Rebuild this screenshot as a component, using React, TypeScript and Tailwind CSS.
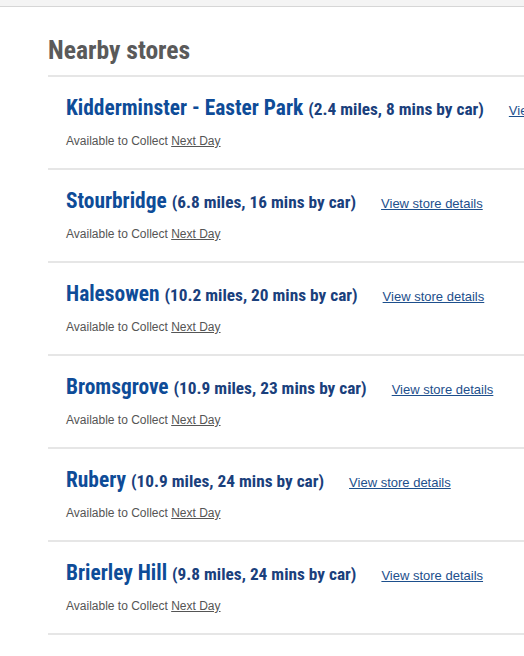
import React from "react";

const stores = [
  { name: "Kidderminster - Easter Park", detail: "(2.4 miles, 8 mins by car)" },
  { name: "Stourbridge", detail: "(6.8 miles, 16 mins by car)" },
  { name: "Halesowen", detail: "(10.2 miles, 20 mins by car)" },
  { name: "Bromsgrove", detail: "(10.9 miles, 23 mins by car)" },
  { name: "Rubery", detail: "(10.9 miles, 24 mins by car)" },
  { name: "Brierley Hill", detail: "(9.8 miles, 24 mins by car)" },
];

const cond = "font-['Roboto_Condensed',Roboto,sans-serif] [font-stretch:condensed]";

export default function App() {
  return (
    <div className="w-[524px] h-[656px] overflow-hidden bg-white font-['Liberation_Sans',Arial,sans-serif]">
      <div className="h-[7px] bg-[#f4f4f4] border-b border-[#d6d6d6]" />
      <div className="pl-[48px]">
        <h2 className={`pt-[27px] pb-[9px] text-[25.6px] leading-[32px] font-bold text-[#5a5a5a] ${cond} border-b-2 border-[#e6e6e6]`}>
          Nearby stores
        </h2>
        <ul>
          {stores.map((s) => (
            <li key={s.name} className="h-[93px] border-b-2 border-[#e6e6e6] pl-[18px] pt-[19px] whitespace-nowrap">
              <div className="flex items-baseline">
                <span className={`${cond} font-bold text-[21.4px] leading-[24px] text-[#0e4c98]`}>
                  {s.name}{" "}
                  <span className="text-[17.3px] text-[#1a407c]">{s.detail}</span>
                </span>
                <a href="#" className="ml-[25px] text-[13px] text-[#1d4f8c] underline">
                  View store details
                </a>
              </div>
              <div className="mt-[12px] text-[12px] leading-[16px] text-[#555]">
                Available to Collect <span className="underline">Next Day</span>
              </div>
            </li>
          ))}
        </ul>
      </div>
    </div>
  );
}
